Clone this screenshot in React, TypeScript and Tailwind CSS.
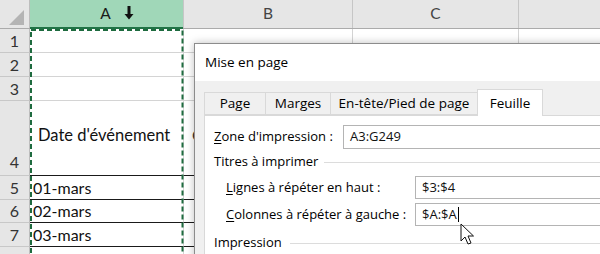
import React from "react";

const rows = [
  { n: "1", h: "h-[24px]", a: "" },
  { n: "2", h: "h-[24px]", a: "" },
  { n: "3", h: "h-[24px]", a: "" },
  { n: "4", h: "h-[75px]", a: "Date d'événement" },
  { n: "5", h: "h-[24px]", a: "01-mars" },
  { n: "6", h: "h-[23px]", a: "02-mars" },
  { n: "7", h: "h-[24px]", a: "03-mars" },
  { n: "", h: "h-[24px]", a: "" },
];

const SheetRow = ({ r, i }: { r: (typeof rows)[number]; i: number }) => {
  const boxed = i >= 3;
  const line = boxed ? "border-b border-b-[#1a1a1a]" : "border-b border-b-[#d4d4d4]";
  return (
    <div className={`flex ${r.h}`}>
      <div
        className={`w-[30px] shrink-0 bg-[#e6e6e6] border-r border-r-[#bdbdbd] border-b border-b-[#c8c8c8] flex justify-center text-[16px] text-[#333] ${
          i === 3 ? "items-end pb-[1px]" : "items-center"
        }`}
      >
        {r.n}
      </div>
      <div className={`w-[153px] shrink-0 ${line} flex items-center pl-[3px] text-[16px] text-[#111]`}>
        {i === 3 ? <span className="pl-[5px] -mt-[6px] text-[16.5px]">{r.a}</span> : r.a}
      </div>
      <div className={`w-[169px] shrink-0 border-l border-l-[#d4d4d4] ${line} flex items-center pl-[8px] text-[16px] text-[#333]`}>
        {i === 3 ? <span className="-mt-[6px]">Catégorie</span> : ""}
      </div>
      <div className="w-[166px] shrink-0 border-l border-l-[#d4d4d4] border-b border-b-[#d4d4d4]" />
      <div className="flex-1 border-l border-l-[#d4d4d4] border-b border-b-[#d4d4d4]" />
    </div>
  );
};

const Field = ({ children }: { children: React.ReactNode }) => (
  <div className="flex-1 h-full bg-white border border-[#b4b4b4] flex items-center pl-[6px] text-[13px] text-[#111]">
    {children}
  </div>
);

const Tab = ({ label, w, active }: { label: string; w: string; active?: boolean }) =>
  active ? (
    <div className={`${w} h-[27px] -mb-px bg-white border border-[#d9d9d9] border-b-0 flex items-center justify-center text-[13.5px] text-black z-10`}>
      {label}
    </div>
  ) : (
    <div className={`${w} h-[23px] border border-[#d9d9d9] border-r-0 bg-[#f0f0f0] flex items-center justify-center text-[13.5px] text-black`}>
      {label}
    </div>
  );

export default function App() {
  return (
    <div className="relative w-[600px] h-[254px] overflow-hidden bg-white" style={{ fontFamily: "Lato, 'Liberation Sans', sans-serif" }}>
      {/* Column headers */}
      <div className="flex h-[29px] bg-[#e6e6e6] border-b border-b-[#ababab]">
        <div className="w-[30px] shrink-0 border-r border-r-[#bdbdbd] flex items-end justify-end pr-[5px] pb-[3px]">
          <svg width="15" height="15" viewBox="0 0 15 15">
            <polygon points="15,0 15,15 0,15" fill="#b4b4b4" />
          </svg>
        </div>
        <div className="w-[153px] shrink-0 bg-[#a0d7b8] border-b-2 border-b-[#217346] -mb-px flex items-center justify-center text-[15.5px] text-[#1a1a1a]">
          <span className="ml-[-2px]">A</span>
          <span className="relative w-0">
            <svg className="absolute left-[13px] -top-[8px]" width="10" height="14" viewBox="0 0 10 14">
              <path d="M3.5 0 H6.5 V8 H9.5 L5 13.5 L0.5 8 H3.5 Z" fill="#111" />
            </svg>
          </span>
        </div>
        <div className="w-[169px] shrink-0 border-l border-l-[#c6c6c6] flex items-center justify-center text-[15.5px] text-[#444]">B</div>
        <div className="w-[166px] shrink-0 border-l border-l-[#c6c6c6] flex items-center justify-center text-[15.5px] text-[#444]">C</div>
        <div className="flex-1 border-l border-l-[#c6c6c6]" />
      </div>

      {/* Grid */}
      {rows.map((r, i) => (
        <SheetRow key={i} r={r} i={i} />
      ))}

      {/* Print area marquee */}
      <svg className="absolute left-[30px] top-[29px] pointer-events-none" width="154" height="240">
        <rect x="1" y="1" width="151.5" height="260" fill="none" stroke="#1e6b3f" strokeWidth="2" strokeDasharray="5 3" />
      </svg>

      {/* Dialog */}
      <div
        className="absolute left-[194px] top-[43px] w-[430px] h-[230px] bg-[#f0f0f0] border border-[#8c8c8c] shadow-[0_0_8px_rgba(0,0,0,0.25)] flex flex-col"
        style={{ fontFamily: "'Open Sans', 'Noto Sans', sans-serif" }}
      >
        <div className="h-[37px] shrink-0 bg-white flex items-center pl-[10px] text-[13.5px] text-black">Mise en page</div>
        <div className="flex-1 flex flex-col pl-[9px] pt-[11px]">
          <div className="flex items-end h-[23px]">
            <Tab label="Page" w="w-[61px]" />
            <Tab label="Marges" w="w-[65px]" />
            <Tab label="En-tête/Pied de page" w="w-[147px] border-r" />
            <Tab label="Feuille" w="w-[66px]" active />
          </div>
          <div className="flex-1 bg-white border border-[#d9d9d9] flex flex-col pl-[9px] pt-[9px] text-[13px] text-black">
            <div className="flex items-center h-[24px]">
              <div className="w-[129px] shrink-0">
                <u className="underline-offset-2">Z</u>one d'impression :
              </div>
              <Field>A3:G249</Field>
            </div>
            <div className="flex items-center h-[20px] mt-[3px]">
              <span>Titres à imprimer</span>
              <div className="flex-1 h-px bg-[#dcdcdc] ml-[6px]" />
            </div>
            <div className="flex items-center h-[23px] mt-[4px] pl-[12px]">
              <div className="w-[189px] shrink-0">
                <u className="underline-offset-2">L</u>ignes à répéter en haut :
              </div>
              <Field>$3:$4</Field>
            </div>
            <div className="flex items-center h-[23px] mt-[4px] pl-[12px]">
              <div className="w-[189px] shrink-0">
                <u className="underline-offset-2">C</u>olonnes à répéter à gauche :
              </div>
              <Field>
                $A:$A
                <span className="inline-block w-px h-[15px] bg-black ml-px" />
              </Field>
            </div>
            <div className="flex items-center h-[20px] mt-[7px]">
              <span>Impression</span>
              <div className="flex-1 h-px bg-[#dcdcdc] ml-[8px]" />
            </div>
          </div>
        </div>
      </div>

      {/* Mouse pointer */}
      <svg className="absolute left-[460px] top-[223px] pointer-events-none" width="16" height="24" viewBox="0 0 16 24">
        <path d="M1 1 L1 18 L5 14 L8 21 L11 20 L8 13 L13.5 13 Z" fill="white" stroke="#111" strokeWidth="1" strokeLinejoin="round" />
      </svg>
    </div>
  );
}
